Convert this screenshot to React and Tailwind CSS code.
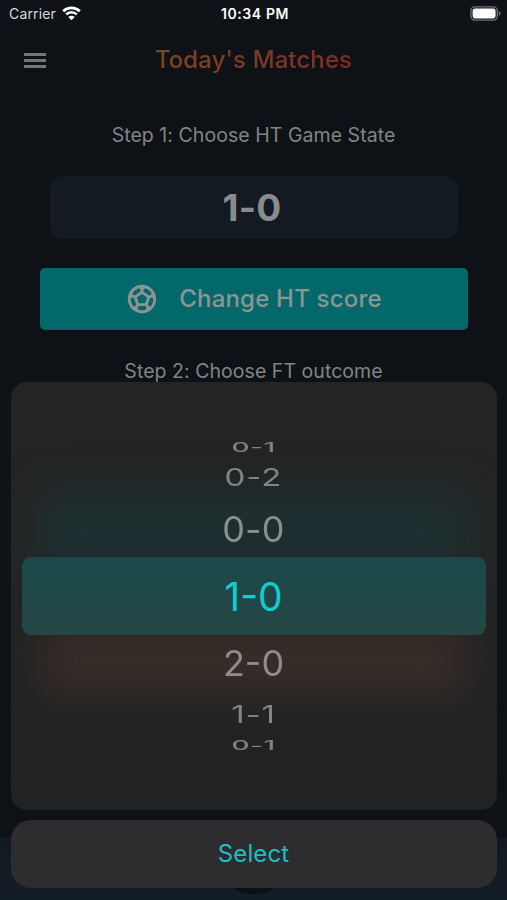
import React from 'react';
import { MdOutlineSportsSoccer } from 'react-icons/md';

// Rows of the score wheel, squeezed vertically towards the edges
const wheelRows = [
  { score: '0-1', row: 'h-[12px]', text: 'text-[28px] font-medium tracking-[0.5px] scale-y-[0.47] text-[#7f8182]' },
  { score: '0-2', row: 'h-[48px]', text: 'text-[33px] tracking-[1px] scale-y-[0.75] text-[#808485]' },
  { score: '0-0', row: 'h-[56px]', text: 'text-[36px] tracking-[0.2px] scale-y-[0.97] text-[#87908f]' },
  { score: '1-0', row: 'h-[78px]', text: 'text-[39px] text-[#12cdd0]', selected: true },
  { score: '2-0', row: 'h-[55px]', text: 'text-[36px] scale-y-[0.97] text-[#918c89]' },
  { score: '1-1', row: 'h-[49px]', text: 'text-[33px] tracking-[0.9px] scale-y-[0.73] text-[#858483]' },
  { score: '0-1', row: 'h-[11px]', text: 'text-[28px] font-medium tracking-[0.5px] scale-y-[0.45] text-[#808182]' },
];

const WifiIcon = () => (
  <svg width="19" height="15" viewBox="0 0 19 15" fill="none" stroke="#fff" strokeWidth="2.7">
    <path d="M1.2 5.2a12 12 0 0 1 16.6 0" />
    <path d="M4.2 8.4a7.6 7.6 0 0 1 10.6 0" />
    <path d="M9.5 14.3 6.3 11.1a4.6 4.6 0 0 1 6.4 0z" fill="#fff" stroke="none" />
  </svg>
);

const BatteryIcon = () => (
  <svg width="31" height="15" viewBox="0 0 31 15" fill="none">
    <rect x="0.9" y="0.9" width="26.4" height="13.2" rx="4" stroke="#6d6f71" strokeWidth="1.4" />
    <rect x="2.6" y="2.6" width="23" height="9.8" rx="2.4" fill="#fff" />
    <path d="M28.8 5v5c1.2-.5 1.8-1.4 1.8-2.5s-.6-2-1.8-2.5z" fill="#6d6f71" />
  </svg>
);

const StatusBar = () => (
  <div className="grid h-[27px] grid-cols-3 items-center pl-[9px] pr-[6px] text-white">
    <div className="flex items-center gap-[6px]">
      <span className="text-[14px] leading-none tracking-[0.15px] text-[#d8d9da]">Carrier</span>
      <WifiIcon />
    </div>
    <span className="text-center text-[14px] font-semibold leading-none tracking-[0.6px] whitespace-nowrap">10:34 PM</span>
    <div className="flex justify-end">
      <BatteryIcon />
    </div>
  </div>
);

const Header = () => (
  <div className="grid h-[66px] grid-cols-[80px_1fr_80px] items-center">
    <button className="ml-[24px] flex w-[22px] flex-col gap-[3px]" aria-label="Menu">
      <span className="h-[3px] bg-[#74777a]" />
      <span className="h-[3px] bg-[#74777a]" />
      <span className="h-[3px] bg-[#74777a]" />
    </button>
    <h1 className="justify-self-center bg-gradient-to-r from-[#7d4719] to-[#7f2b2b] bg-clip-text text-[24px] font-medium leading-[32px] tracking-[0.1px] whitespace-nowrap text-transparent">
      Today's Matches
    </h1>
  </div>
);

const ScoreSheet = () => (
  <div className="absolute inset-x-[10.5px] bottom-[12px] flex flex-col gap-[10px]">
    <div className="relative h-[428px] overflow-hidden rounded-[16px] bg-gradient-to-b from-[#232425] via-[#242424] to-[#202123]">
      {/* buttons of the page glowing through the frosted sheet */}
      <div className="absolute inset-x-[30px] top-[112px] h-[70px] bg-[#1e3031] blur-[20px]" />
      <div className="absolute inset-x-[34px] top-[246px] h-[66px] bg-[#372d28] blur-[18px]" />
      <div className="relative flex flex-col pt-[59px]">
        {wheelRows.map((item, i) => (
          <div
            key={i}
            className={`${item.row} flex items-center justify-center ${item.selected ? 'mx-[11px] rounded-[9px] bg-gradient-to-b from-[#1a484a] to-[#244745]' : ''}`}
          >
            <span className={`${item.text} leading-none whitespace-nowrap`}>{item.score}</span>
          </div>
        ))}
      </div>
    </div>
    <button className="h-[68px] rounded-[20px] bg-[#2d2d2f] text-[24px] tracking-[0.1px] text-[#1abfc3]">Select</button>
  </div>
);

const App = () => (
  <div className="relative flex h-[900px] w-[507px] flex-col overflow-hidden bg-[#0e1216] font-['Inter',sans-serif]">
    <StatusBar />
    <Header />
    <main className="flex flex-1 flex-col items-center">
      <p className="mt-[28px] text-[19.5px] leading-[28px] tracking-[0.05px] text-[#818486]">Step 1: Choose HT Game State</p>
      <div className="mt-[27px] flex h-[63px] w-[408px] items-center justify-center rounded-[13px] bg-[#131a21] text-[37px] font-bold tracking-[0.3px] text-[#8a8b8e]">
        <span className="-ml-[3px]">1-0</span>
      </div>
      <button className="mt-[29px] flex h-[62px] w-[428px] items-center justify-center gap-[20px] rounded-[5px] bg-[#03686a] text-[24px] font-medium tracking-[0.2px] text-[#8d9494]">
        <MdOutlineSportsSoccer size={34} />
        Change HT score
      </button>
      <p className="mt-[27px] text-[19.5px] leading-[28px] tracking-[0.05px] text-[#818486]">Step 2: Choose FT outcome</p>
    </main>
    <nav className="flex h-[62px] items-end justify-center bg-gradient-to-b from-[#121920] to-[#131d26] pb-[6px]">
      <span className="h-[46px] w-[54px] rounded-full bg-[#0c1014]" />
    </nav>
    <ScoreSheet />
  </div>
);

export default App;
